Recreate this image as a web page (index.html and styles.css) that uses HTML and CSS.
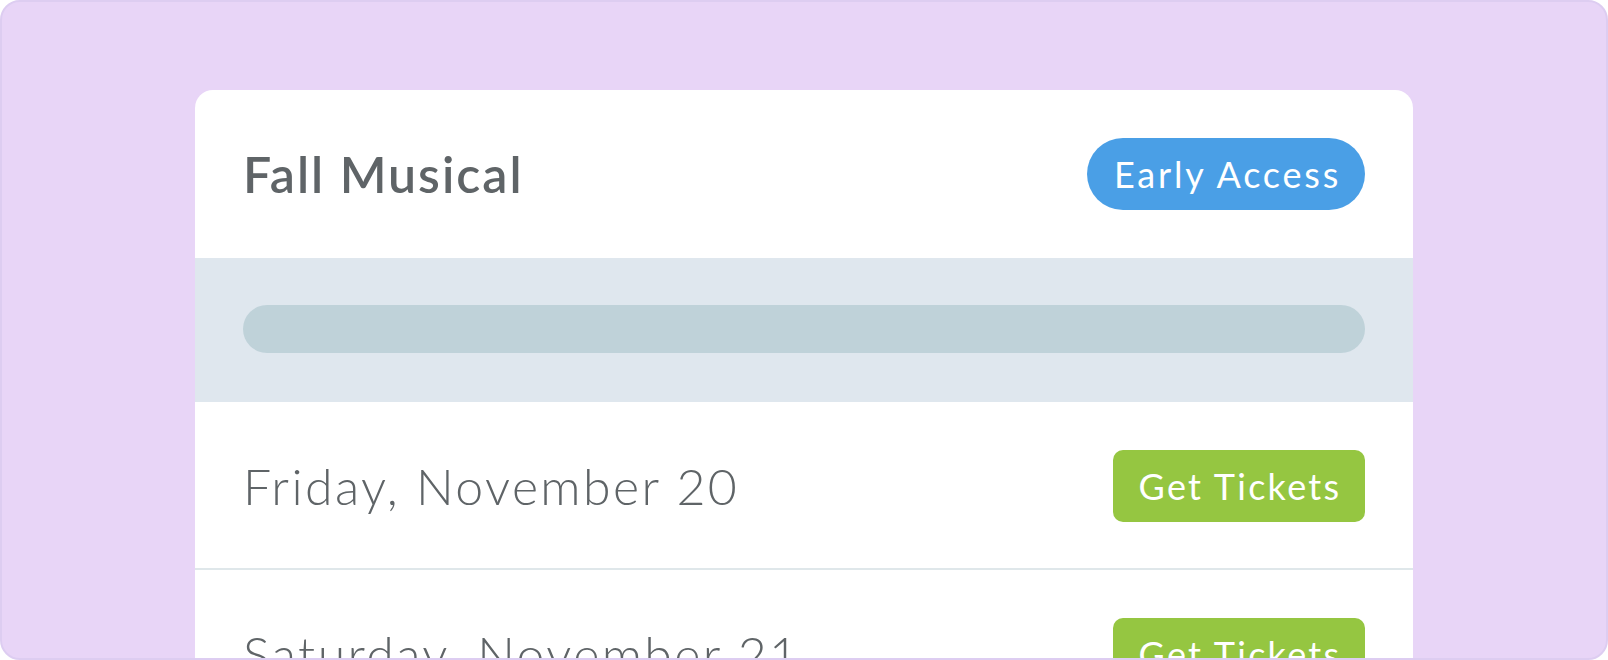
FILE: index.html
```html
<!DOCTYPE html>
<html lang="en">
<head>
<meta charset="utf-8">
<title>Fall Musical</title>
<link rel="stylesheet" href="styles.css">
</head>
<body>
<div class="frame">
  <div class="card">
    <div class="header">
      <h1 class="title">Fall Musical</h1>
      <span class="badge">Early Access</span>
    </div>
    <div class="progress">
      <div class="bar"></div>
    </div>
    <div class="row">
      <span class="date">Friday, November 20</span>
      <a class="btn">Get Tickets</a>
    </div>
    <div class="row">
      <span class="date">Saturday, November 21</span>
      <a class="btn">Get Tickets</a>
    </div>
  </div>
</div>
</body>
</html>
```
FILE: styles.css
```css
* { box-sizing: border-box; }
html, body { margin: 0; padding: 0; background: #ffffff; }
body { font-family: Lato, "Open Sans", sans-serif; }
.frame {
  width: 1608px;
  height: 660px;
  background: #e8d5f7;
  border: 2px solid #ddcdf1;
  border-radius: 20px;
  padding: 88px 193px 0;
  overflow: hidden;
}
.card {
  background: #ffffff;
  border-radius: 18px 18px 0 0;
}
.header {
  display: flex;
  justify-content: space-between;
  align-items: center;
  padding: 48px;
}
.title {
  margin: 0;
  font-size: 50px;
  font-weight: 600;
  color: #5f6467;
  letter-spacing: 2px;
}
.badge {
  display: flex;
  align-items: center;
  justify-content: center;
  width: 278px;
  height: 72px;
  padding-left: 3px;
  border-radius: 36px;
  background: #4a9fe6;
  color: #ffffff;
  font-size: 36px;
  letter-spacing: 2.8px;
}
.progress {
  background: #dfe7ee;
  padding: 47px 48px 49px;
}
.bar {
  height: 48px;
  border-radius: 24px;
  background: #bfd2d9;
}
.row {
  display: flex;
  justify-content: space-between;
  align-items: center;
  padding: 48px 48px 46px;
  border-bottom: 2px solid #dfe7ea;
}
.date {
  font-size: 50px;
  font-weight: 300;
  color: #5f6467;
  letter-spacing: 2.4px;
}
.btn {
  display: flex;
  align-items: center;
  justify-content: center;
  width: 252px;
  height: 72px;
  padding-left: 2px;
  border-radius: 10px;
  background: #95c641;
  color: #ffffff;
  font-size: 36px;
  letter-spacing: 2.3px;
}
```
